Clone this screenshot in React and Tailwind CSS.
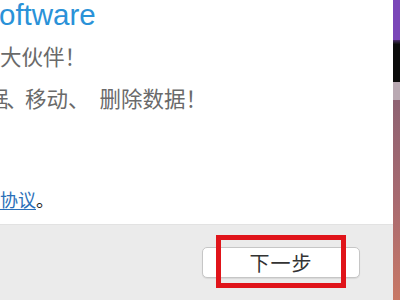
export default function App() {
  const cjk = { fontFamily: '"Noto Sans CJK SC", "Noto Sans", sans-serif' };
  return (
    <div className="flex w-[400px] h-[300px] overflow-hidden bg-white">
      <div className="flex flex-col w-[393px] h-[300px]">
        <div className="h-[224px] bg-white overflow-hidden">
          <div
            className="text-[29.5px] leading-[30px] text-[#2a92d8] -ml-[1px]"
            style={{ fontFamily: '"Liberation Sans", Arial, sans-serif' }}
          >
            oftware
          </div>
          <div className="text-[21.5px] leading-[24px] text-[#6a6a6a] mt-[14px] whitespace-nowrap" style={cjk}>
            大伙伴！
          </div>
          <div className="text-[21.5px] leading-[24px] text-[#6a6a6a] mt-[18px] -ml-[13px] whitespace-nowrap" style={cjk}>
            <span className="tracking-[-2.5px]">据、</span>移动、<span className="ml-[10px]">删除数据！</span>
          </div>
          <div className="text-[18px] leading-[20px] mt-[79px] whitespace-nowrap text-[#222]" style={cjk}>
            <span className="text-[#2a6fb8] underline underline-offset-[2px]">协议</span>。
          </div>
        </div>
        <div className="relative flex-1 bg-[#ebebeb] border-t border-[#e2e2e2]">
          <div className="absolute left-[202px] top-[22px] w-[158px] h-[31px] rounded-[5px] border border-[#c6c6c6] bg-white shadow-[0_1px_1px_rgba(0,0,0,0.08)] flex items-center justify-center">
            <span className="text-[20px] text-[#333] tracking-[1px]" style={cjk}>下一步</span>
          </div>
          <div className="absolute left-[216px] top-[10px] w-[130px] h-[53px] border-[5px] border-[#e0141a]" />
        </div>
      </div>
      <div className="flex flex-col w-[7px] h-[300px]">
        <div className="h-[40px] bg-[#7a46b8]" />
        <div className="h-[4px] bg-gradient-to-b from-[#4a2a6a] to-[#111]" />
        <div className="h-[38px] bg-[#0b0b0b]" />
        <div className="h-[18px] bg-[#b9a9b2]" />
        <div className="flex-1 bg-gradient-to-b from-[#8e6272] via-[#a86a70] to-[#c87865]" />
      </div>
    </div>
  );
}
